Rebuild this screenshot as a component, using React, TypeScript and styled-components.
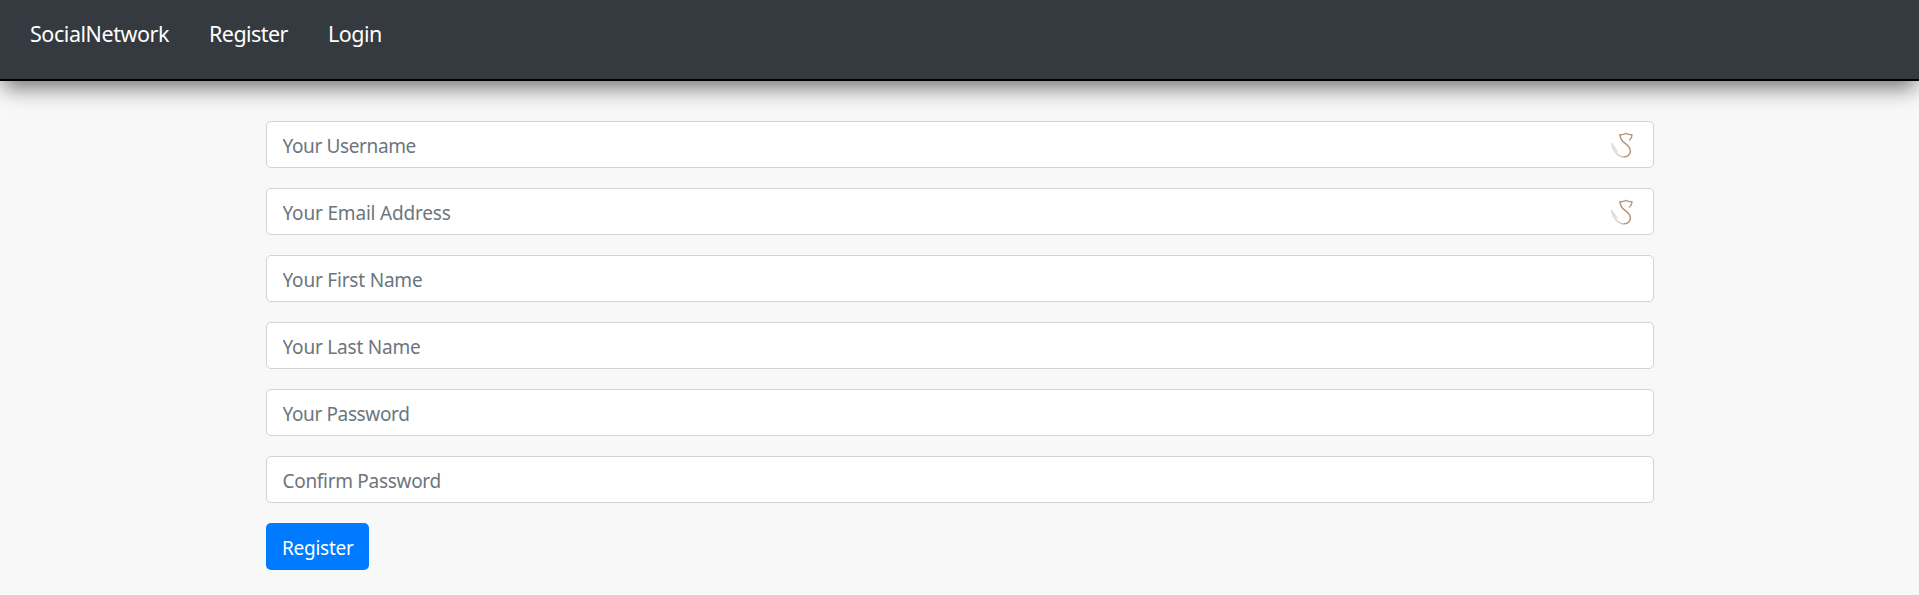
import React from "react";
import styled, { createGlobalStyle } from "styled-components";

const GlobalStyle = createGlobalStyle`
  *, *::before, *::after { box-sizing: border-box; }
  body {
    margin: 0;
    min-height: 100vh;
    background: #f8f8f8;
    font-family: "Segoe UI", "Noto Sans", "Open Sans", sans-serif;
    font-size: 19px;
    line-height: 30px;
  }
`;

const Navbar = styled.nav`
  display: flex;
  align-items: flex-start;
  gap: 40px;
  height: 81px;
  padding: 17px 30px 0;
  background: #343a40;
  border-bottom: 2px solid #000;
  box-shadow: 0 10px 20px -3px rgba(0, 0, 0, 0.53);
`;

const NavLink = styled.a<{ $width: number; $tracking: number }>`
  width: ${(p) => p.$width}px;
  color: #fff;
  font-size: 21.5px;
  line-height: 34px;
  letter-spacing: ${(p) => p.$tracking}px;
  white-space: nowrap;
  text-decoration: none;
`;

const Form = styled.form`
  display: flex;
  flex-direction: column;
  align-items: flex-start;
  gap: 20px;
  width: 1388px;
  margin: 40px auto 0;
`;

const Field = styled.div`
  display: flex;
  align-items: center;
  width: 100%;
  height: 47px;
  padding: 0 19px 0 16px;
  background: #fff;
  border: 1px solid #ced4da;
  border-radius: 5px;
`;

const Input = styled.input<{ $tracking: number }>`
  flex: 1;
  min-width: 0;
  height: 45px;
  padding: 2px 0 0;
  border: 0;
  outline: 0;
  background: transparent;
  color: #495057;
  font: inherit;
  letter-spacing: ${(p) => p.$tracking}px;
  &::placeholder { color: #6c757d; opacity: 1; }
`;

const SubmitButton = styled.button`
  width: 103px;
  height: 47px;
  padding: 2px 0 0 16.5px;
  border: 0;
  border-radius: 5px;
  background: #007bff;
  color: #fff;
  font: inherit;
  letter-spacing: -0.25px;
  text-align: left;
`;

const ManagerIcon = () => (
  <svg width="24" height="28" viewBox="0 0 24 28" fill="none" strokeLinecap="round" strokeLinejoin="round">
    <path d="M10 3.7 Q13.5 3.9 16 2.4 Q18.5 3.9 22 3.7 C22 6 21.4 7.6 19.6 9" stroke="#b59a86" strokeWidth="1.4" />
    <path d="M10 3.7 C10.2 7.8 11.8 10 14.8 12.2 C18 14.6 20.8 16.8 20.4 20.4 C20 24 17 26 13.5 25.8" stroke="#b3957f" strokeWidth="1.5" />
    <path d="M13.5 25.8 C10 25.8 8 24.2 5.8 21.6" stroke="#d3bfb0" strokeWidth="1.4" />
    <path d="M1.6 12.5 C2.4 17 4.2 20.5 7.4 23 M1.6 12.5 C3.6 15.5 5 17.5 7 20" stroke="#e6dbd3" strokeWidth="1.5" />
  </svg>
);

const links = [
  { label: "SocialNetwork", width: 139, tracking: -0.45 },
  { label: "Register", width: 79, tracking: -0.55 },
  { label: "Login", width: 54, tracking: -0.5 },
];

const fields = [
  { label: "Your Username", type: "text", tracking: -0.37, icon: true },
  { label: "Your Email Address", type: "email", tracking: -0.18, icon: true },
  { label: "Your First Name", type: "text", tracking: -0.2 },
  { label: "Your Last Name", type: "text", tracking: -0.2 },
  { label: "Your Password", type: "password", tracking: -0.37 },
  { label: "Confirm Password", type: "password", tracking: -0.3 },
];

export default function App() {
  return (
    <>
      <GlobalStyle />
      <Navbar>
        {links.map((l) => (
          <NavLink key={l.label} $width={l.width} $tracking={l.tracking}>
            {l.label}
          </NavLink>
        ))}
      </Navbar>
      <Form>
        {fields.map((f) => (
          <Field key={f.label}>
            <Input type={f.type} placeholder={f.label} $tracking={f.tracking} />
            {f.icon && <ManagerIcon />}
          </Field>
        ))}
        <SubmitButton type="button">Register</SubmitButton>
      </Form>
    </>
  );
}
